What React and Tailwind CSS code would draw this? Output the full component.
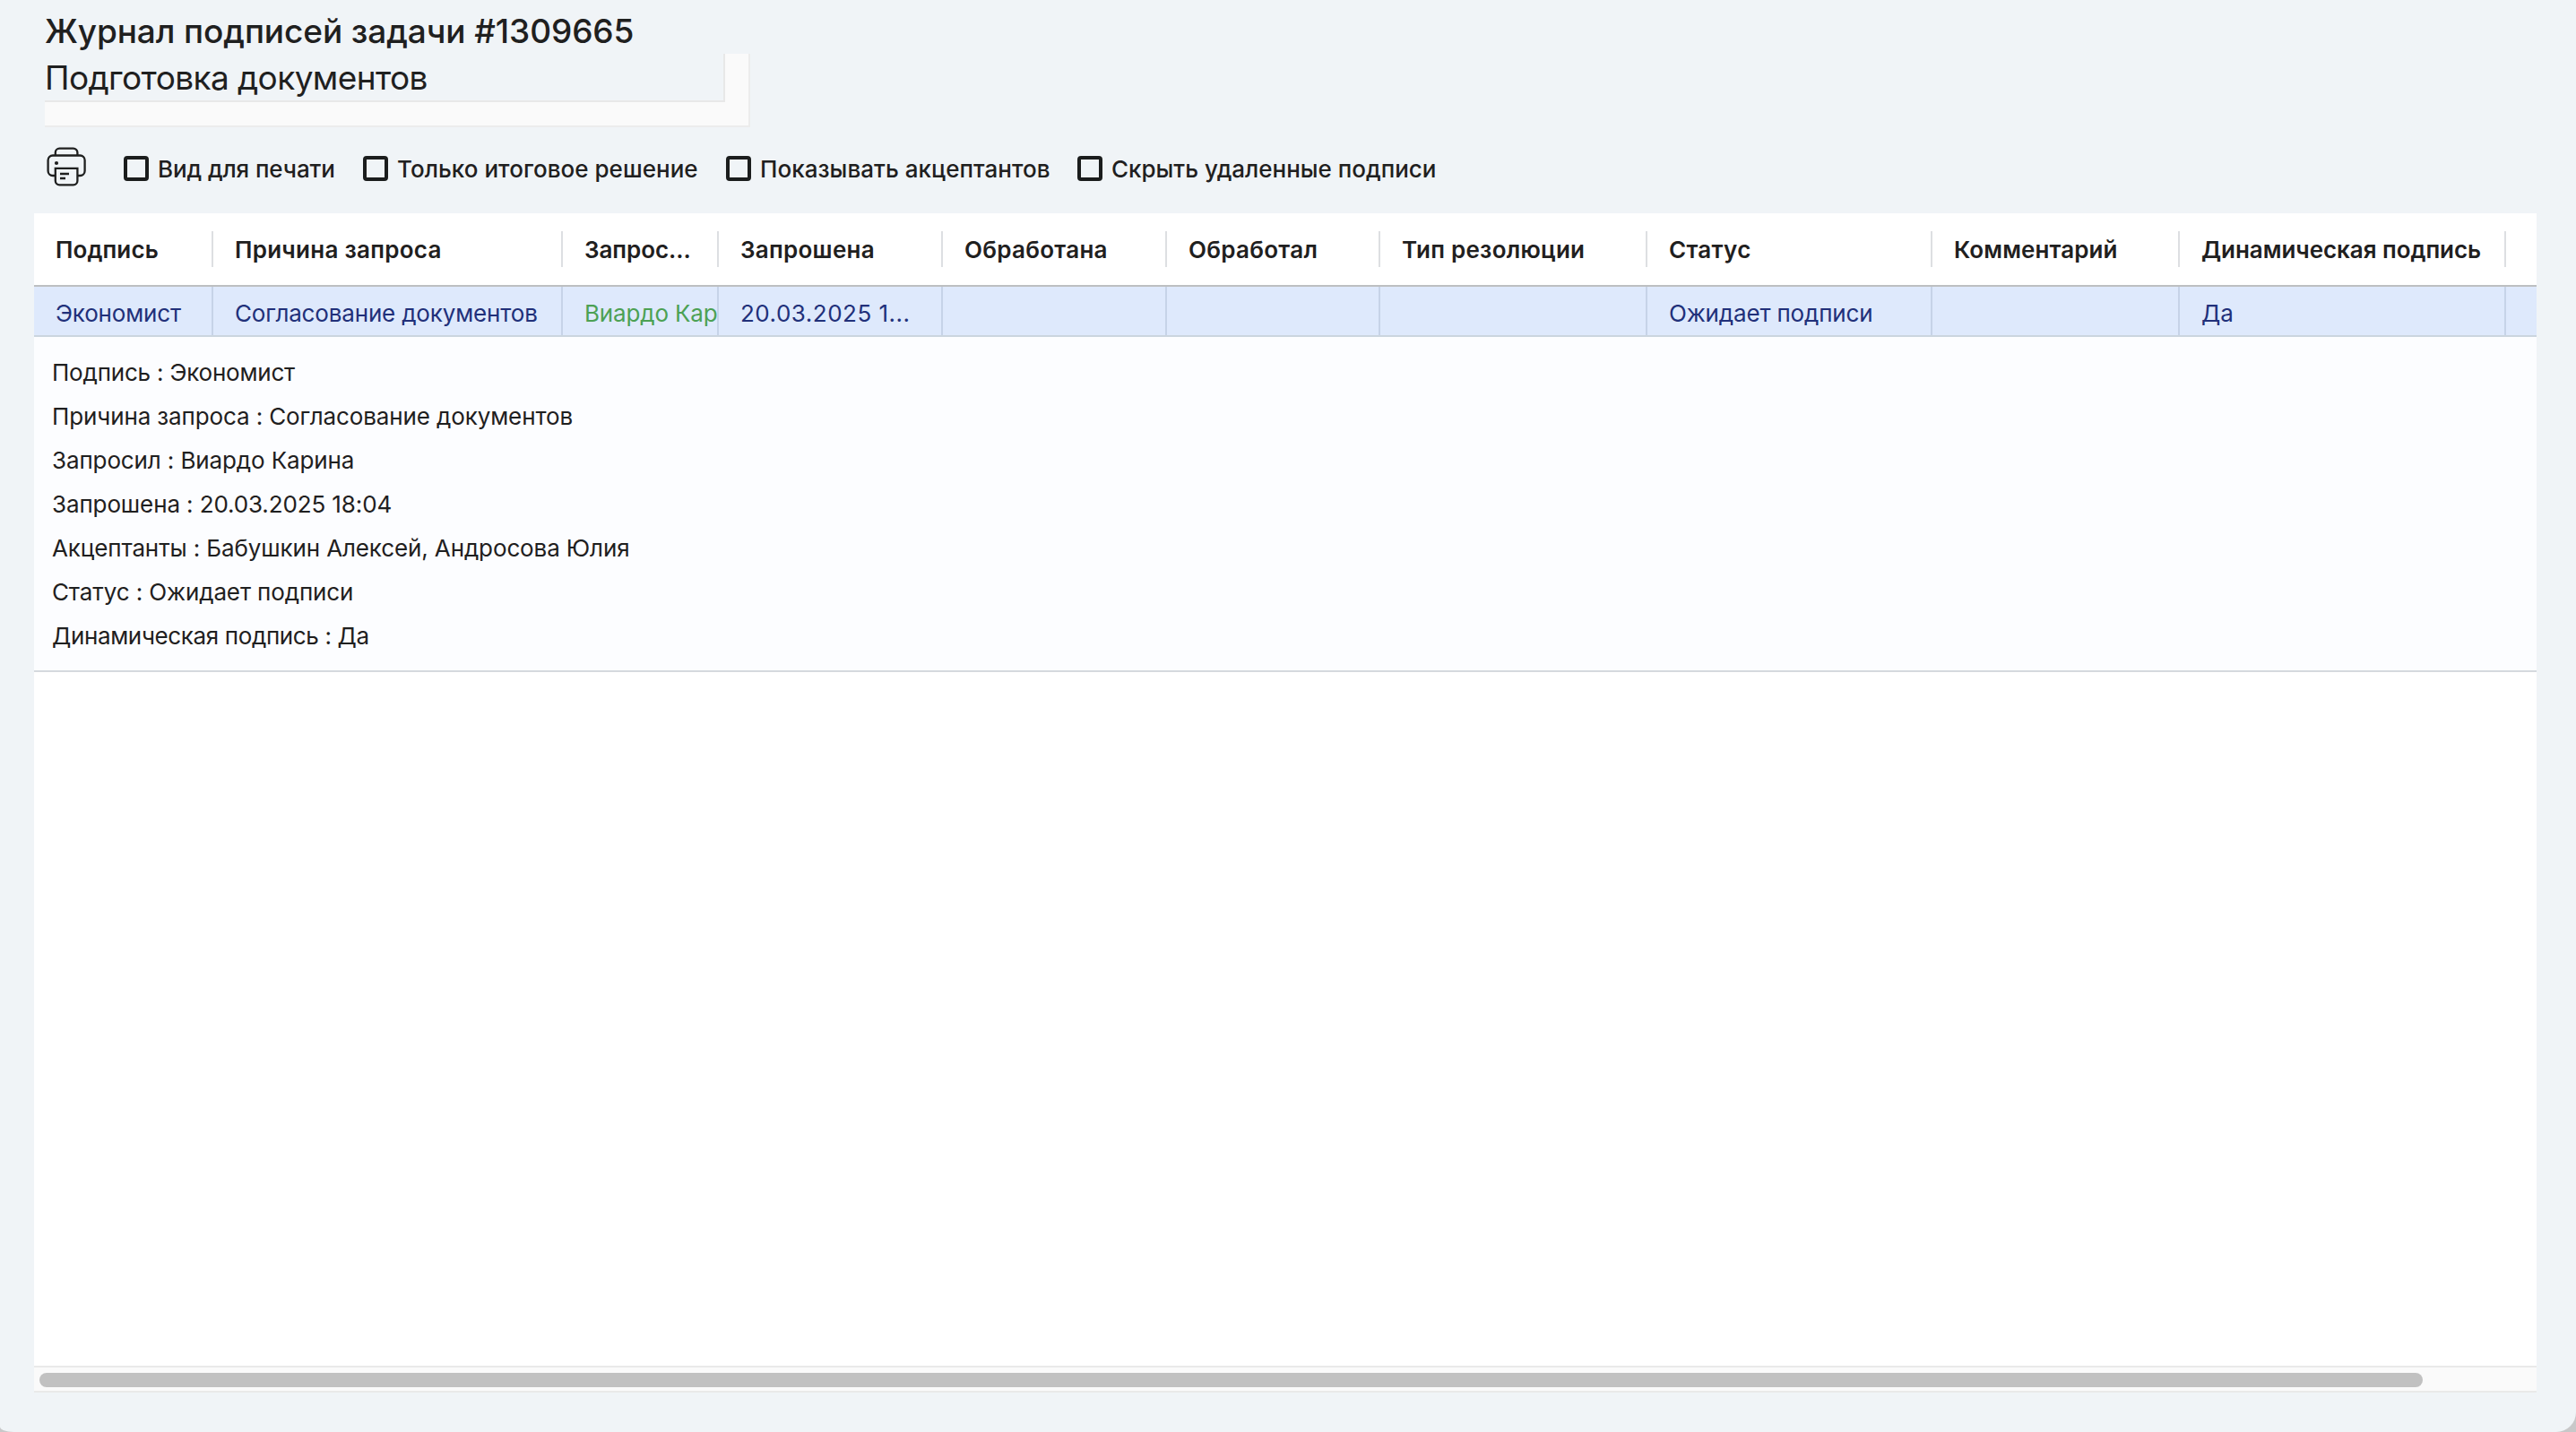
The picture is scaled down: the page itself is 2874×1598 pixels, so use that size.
import React from 'react';

const columns = [
  { title: 'Подпись', width: 'w-[200px]', value: 'Экономист', tracking: 'tracking-[0.1px]' },
  { title: 'Причина запроса', width: 'w-[390px]', value: 'Согласование документов' },
  { title: 'Запрос...', width: 'w-[174px]', value: 'Виардо Карина', link: true, tracking: 'tracking-[-0.05px]' },
  { title: 'Запрошена', width: 'w-[250px]', value: '20.03.2025 1...', valueTracking: 'tracking-[0.5px]' },
  { title: 'Обработана', width: 'w-[250px]', value: '' },
  { title: 'Обработал', width: 'w-[238px]', value: '' },
  { title: 'Тип резолюции', width: 'w-[298px]', value: '' },
  { title: 'Статус', width: 'w-[318px]', value: 'Ожидает подписи' },
  { title: 'Комментарий', width: 'w-[276px]', value: '', tracking: 'tracking-[0.1px]' },
  { title: 'Динамическая подпись', width: 'w-[364px]', value: 'Да', tracking: 'tracking-[-0.05px]' },
];

const details = [
  { text: 'Подпись : Экономист', tracking: 'tracking-[-0.2px]' },
  { text: 'Причина запроса : Согласование документов' },
  { text: 'Запросил : Виардо Карина' },
  { text: 'Запрошена : 20.03.2025 18:04' },
  { text: 'Акцептанты : Бабушкин Алексей, Андросова Юлия' },
  { text: 'Статус : Ожидает подписи' },
  { text: 'Динамическая подпись : Да', tracking: 'tracking-[-0.36px]' },
];

const filters = [
  { label: 'Вид для печати', width: 'w-[267px]', tracking: 'tracking-[-0.1px]' },
  { label: 'Только итоговое решение', width: 'w-[405px]', tracking: 'tracking-[0.04px]' },
  { label: 'Показывать акцептантов', width: 'w-[392px]', tracking: 'tracking-[0.05px]' },
  { label: 'Скрыть удаленные подписи', width: 'w-[410px]', tracking: 'tracking-normal' },
];

function PrinterIcon() {
  return (
    <svg width="44" height="44" viewBox="0 0 44 44" fill="none" stroke="#1f2020" strokeWidth="2.3">
      <path d="M9.8 9.5V6.2a4.6 4.6 0 0 1 4.6-4.6h15.4a4.6 4.6 0 0 1 4.6 4.6v3.3" />
      <path d="M9.8 32h-3a5.2 5.2 0 0 1-5.2-5.2V14.7a5.2 5.2 0 0 1 5.2-5.2h30.600a5.200 5.200 0 0 1 5.200 5.200v12.100a5.200 5.200 0 0 1-5.200 5.200h-3" />
      <path d="M9.8 23.8h24.600v14a4.600 4.600 0 0 1-4.600 4.600H14.400a4.600 4.600 0 0 1-4.600-4.600z" />
      <path d="M15 30h10M15 35h6" />
      <circle cx="11" cy="18" r="2.1" fill="#1f2020" stroke="none" />
    </svg>
  );
}

function Checkbox({ label, width, tracking }) {
  return (
    <label className={`${width} flex items-center gap-2.5`}>
      <span className="size-7 rounded-[4px] border-4 border-[#1b1d1d]" />
      <span className={`pt-0.5 text-[26px] font-medium leading-7 whitespace-nowrap ${tracking}`}>{label}</span>
    </label>
  );
}

function App() {
  return (
    <div className="h-[1598px] w-[2874px] bg-[#c8c8c9]">
      <div className="flex h-full flex-col overflow-hidden rounded-br-[22px] rounded-bl-[15px_6px] bg-[#f0f4f7] pl-[38px] pr-11 font-['Inter',sans-serif] text-[#1f2020]">
        {/* Title */}
        <div className="h-[60px] pl-3 pt-3 text-[37px] font-medium leading-[46px] tracking-[-0.1px] whitespace-nowrap">
          Журнал подписей задачи #1309665
        </div>
        <div className="ml-3 grid h-[82px] w-[787px] grid-cols-[1fr_28px] grid-rows-[54px_28px]">
          <div className="border-b-2 border-r-2 border-[#e8e8e8] text-[37px] leading-[54px] tracking-[-0.6px] whitespace-nowrap">
            Подготовка документов
          </div>
          <div className="border-r-2 border-[#ececec] bg-[#fafafa]" />
          <div className="col-span-2 border-b-2 border-r-2 border-[#ececec] bg-[#fafafa]" />
        </div>

        {/* Toolbar */}
        <div className="flex h-24 items-start pl-[14px] pt-[22px]">
          <PrinterIcon />
          <div className="ml-[42px] flex pt-[9px]">
            {filters.map((filter) => (
              <Checkbox key={filter.label} {...filter} />
            ))}
          </div>
        </div>

        {/* Table */}
        <div className="flex h-[1316px] flex-col bg-white">
          <div className="flex h-[82px] items-center border-b-2 border-[#bdbfc1]">
            {columns.map((col) => (
              <div key={col.title} className={`${col.width} h-10 shrink-0 border-r-2 border-[#dddfe2] pl-6 text-[26px] font-semibold leading-[42px] whitespace-nowrap ${col.tracking || 'tracking-[0.27px]'}`}>
                {col.title}
              </div>
            ))}
          </div>
          <div className="flex h-14 border-b-2 border-[#cbd5df] bg-[#dee9fc]">
            {columns.map((col) => (
              <div key={col.title} className={`${col.width} shrink-0 overflow-hidden border-r-2 border-[#c6d3e8] pl-6 text-[26px] leading-[60px] whitespace-nowrap ${col.valueTracking || 'tracking-[-0.17px]'} ${col.link ? 'text-[#4ca154]' : 'text-[#21307a]'}`}>
                {col.value}
              </div>
            ))}
          </div>
          <div className="h-[374px] border-b-2 border-[#d5d9de] bg-[#fcfdff] pl-5 pt-[15px] text-[26px] leading-[49px]">
            {details.map((line) => (
              <div key={line.text} className={line.tracking || 'tracking-[-0.12px]'}>{line.text}</div>
            ))}
          </div>
          <div className="flex-1" />
          {/* Horizontal scrollbar */}
          <div className="h-[30px] border-y-2 border-[#e9e9e9] bg-[#fafafa] pl-1.5 pt-1.5">
            <div className="h-4 w-[2659px] rounded-full bg-[#c1c1c1]" />
          </div>
        </div>
      </div>
    </div>
  );
}

export default App;
